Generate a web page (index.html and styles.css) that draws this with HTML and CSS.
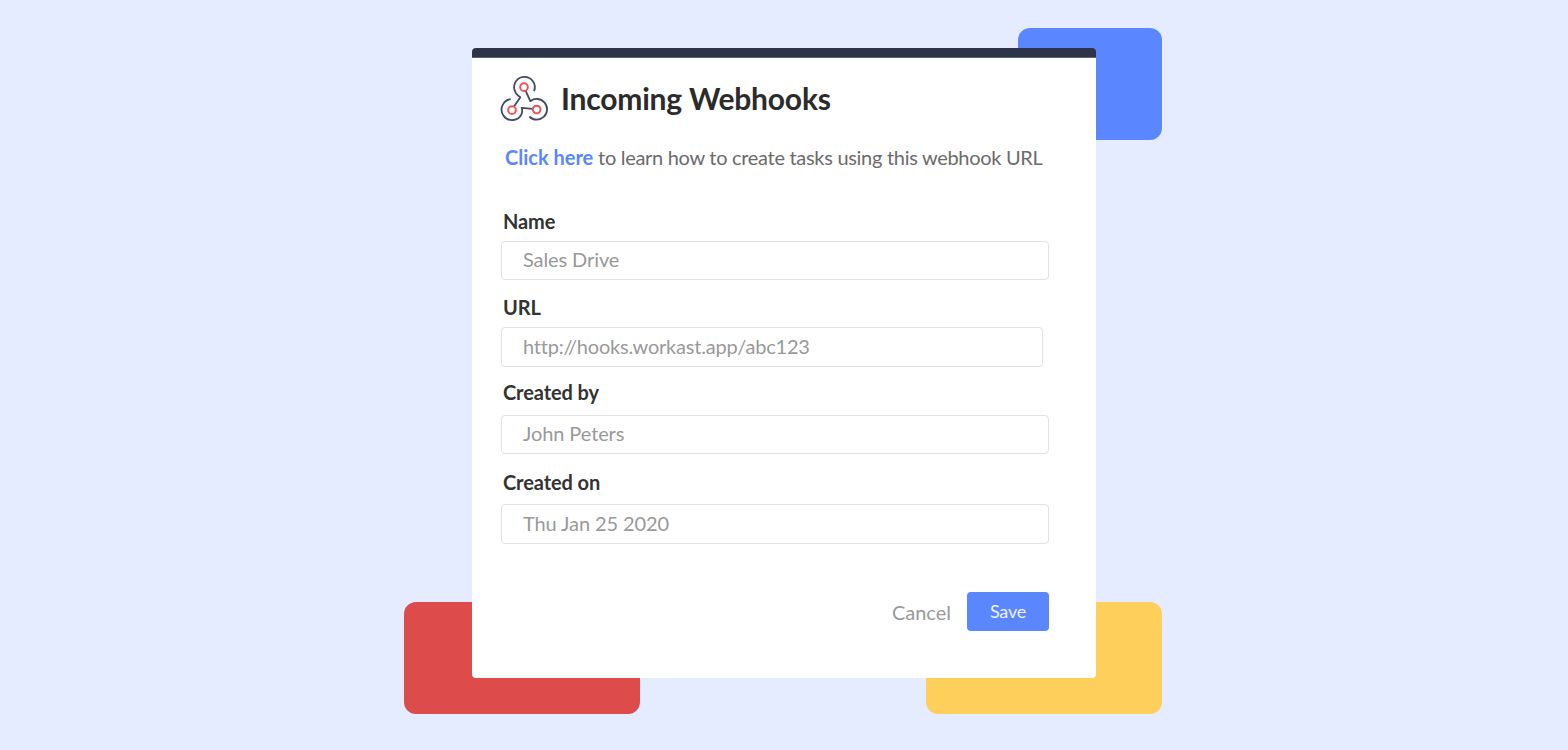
FILE: index.html
```
<!doctype html>
<html lang="en">
<head>
    <meta charset="UTF-8">
    <title>Incoming Webhooks</title>
    <link rel="stylesheet" href="styles.css">
</head>
<body>
<div class="shape shape-blue"></div>
<div class="shape shape-red"></div>
<div class="shape shape-yellow"></div>

<form class="card">
    <div class="title">
        <svg class="logo" viewBox="32 25.5 147 144" fill="none" stroke-width="5.5">
            <g stroke="#444c60" stroke-linejoin="round">
                <path d="M131 77A31 31 0 1 0 77 83Q82 90 90 95L71 123"/>
                <path d="M61 101A31.5 31.5 0 1 0 94 145Q97 137 94 127L127 130"/>
                <path d="M106 76L120 107A31 31 0 1 1 117 153"/>
            </g>
            <g stroke="#ee5252" stroke-width="6">
                <circle cx="101" cy="65" r="11.5"/>
                <circle cx="65" cy="134" r="11.5"/>
                <circle cx="139" cy="132" r="11.5"/>
            </g>
        </svg>
        <h2>Incoming Webhooks</h2>
    </div>
    <p class="intro"><a href="#">Click here</a> to learn how to create tasks using this webhook URL</p>

    <div class="field field-name">
        <label for="name">Name</label>
        <input id="name" type="text" value="Sales Drive">
    </div>
    <div class="field field-url">
        <label for="url">URL</label>
        <input id="url" type="text" value="http://hooks.workast.app/abc123">
    </div>
    <div class="field field-by">
        <label for="createdBy">Created by</label>
        <input id="createdBy" type="text" value="John Peters">
    </div>
    <div class="field field-on">
        <label for="createdOn">Created on</label>
        <input id="createdOn" type="text" value="Thu Jan 25 2020">
    </div>

    <div class="actions">
        <button type="button" class="cancel-btn">Cancel</button>
        <button type="button" class="save-btn">Save</button>
    </div>
</form>
</body>
</html>
```
FILE: styles.css
```
* {
    box-sizing: border-box;
}

body {
    position: relative;
    height: 750px;
    margin: 0;
    padding-top: 48px;
    font-family: Lato, sans-serif;
    background-color: #e6ecff;
    overflow: hidden;
}

/* coloured blocks behind the card */
.shape {
    position: absolute;
    width: 236px;
    height: 112px;
    border-radius: 12px;
}

.shape-blue {
    top: 28px;
    left: 1018px;
    width: 144px;
    background-color: #5a86ff;
}

.shape-red {
    top: 602px;
    left: 404px;
    background-color: #dd4b4b;
}

.shape-yellow {
    top: 602px;
    left: 926px;
    background-color: #ffcf5c;
}

.card {
    position: relative;
    width: 624px;
    height: 630px;
    margin: 0 auto;
    padding: 25px 47px 0 29px;
    border-radius: 4px;
    background: linear-gradient(#2d3348 9px, #5d6272 9px, #5d6272 10px, #fff 10px);
}

.title {
    display: flex;
    align-items: center;
    height: 50px;
}

.logo {
    width: 49px;
    height: 48px;
    overflow: visible;
}

h2 {
    margin: 0 0 0 11px;
    font-size: 30px;
    line-height: 36px;
    letter-spacing: -0.19px;
    color: #2b2b2b;
}

.intro {
    margin: 22px 0 40px 4px;
    font-size: 20px;
    line-height: 24px;
    letter-spacing: -0.3px;
    white-space: nowrap;
    color: #6b6b6b;
}

.intro a {
    font-weight: bold;
    letter-spacing: 0;
    text-decoration: none;
    color: #5a86ff;
}

.field {
    display: flex;
    flex-direction: column;
    gap: 8px;
    margin-bottom: 15px;
}

.field label {
    margin-left: 2px;
    font-size: 20px;
    font-weight: bold;
    line-height: 24px;
    letter-spacing: -0.1px;
    color: #333;
}

.field input {
    height: 39px;
    padding: 0 20px 3px 21px;
    border: 1px solid #e2e2e2;
    border-radius: 4px;
    font: 20px Lato, sans-serif;
    letter-spacing: -0.1px;
    color: #999;
    background-color: #fff;
}

.field-url {
    margin-bottom: 13px;
}

.field-url input {
    width: 542px;
    height: 40px;
    padding-bottom: 2px;
    letter-spacing: -0.2px;
}

.field-by {
    gap: 11px;
    margin-bottom: 16px;
}

.field-on {
    gap: 10px;
    margin-bottom: 48px;
}

.field-on input {
    height: 40px;
}

.actions {
    display: flex;
    justify-content: flex-end;
    align-items: center;
    gap: 16px;
}

button {
    padding: 0;
    border: none;
    font-family: Lato, sans-serif;
    cursor: pointer;
}

.cancel-btn {
    padding-top: 1px;
    font-size: 20px;
    color: #999;
    background: none;
}

.save-btn {
    width: 82px;
    height: 39px;
    padding-bottom: 2px;
    border-radius: 4px;
    font-size: 18px;
    letter-spacing: -0.2px;
    color: #eef2ff;
    background-color: #5a86ff;
}
```
